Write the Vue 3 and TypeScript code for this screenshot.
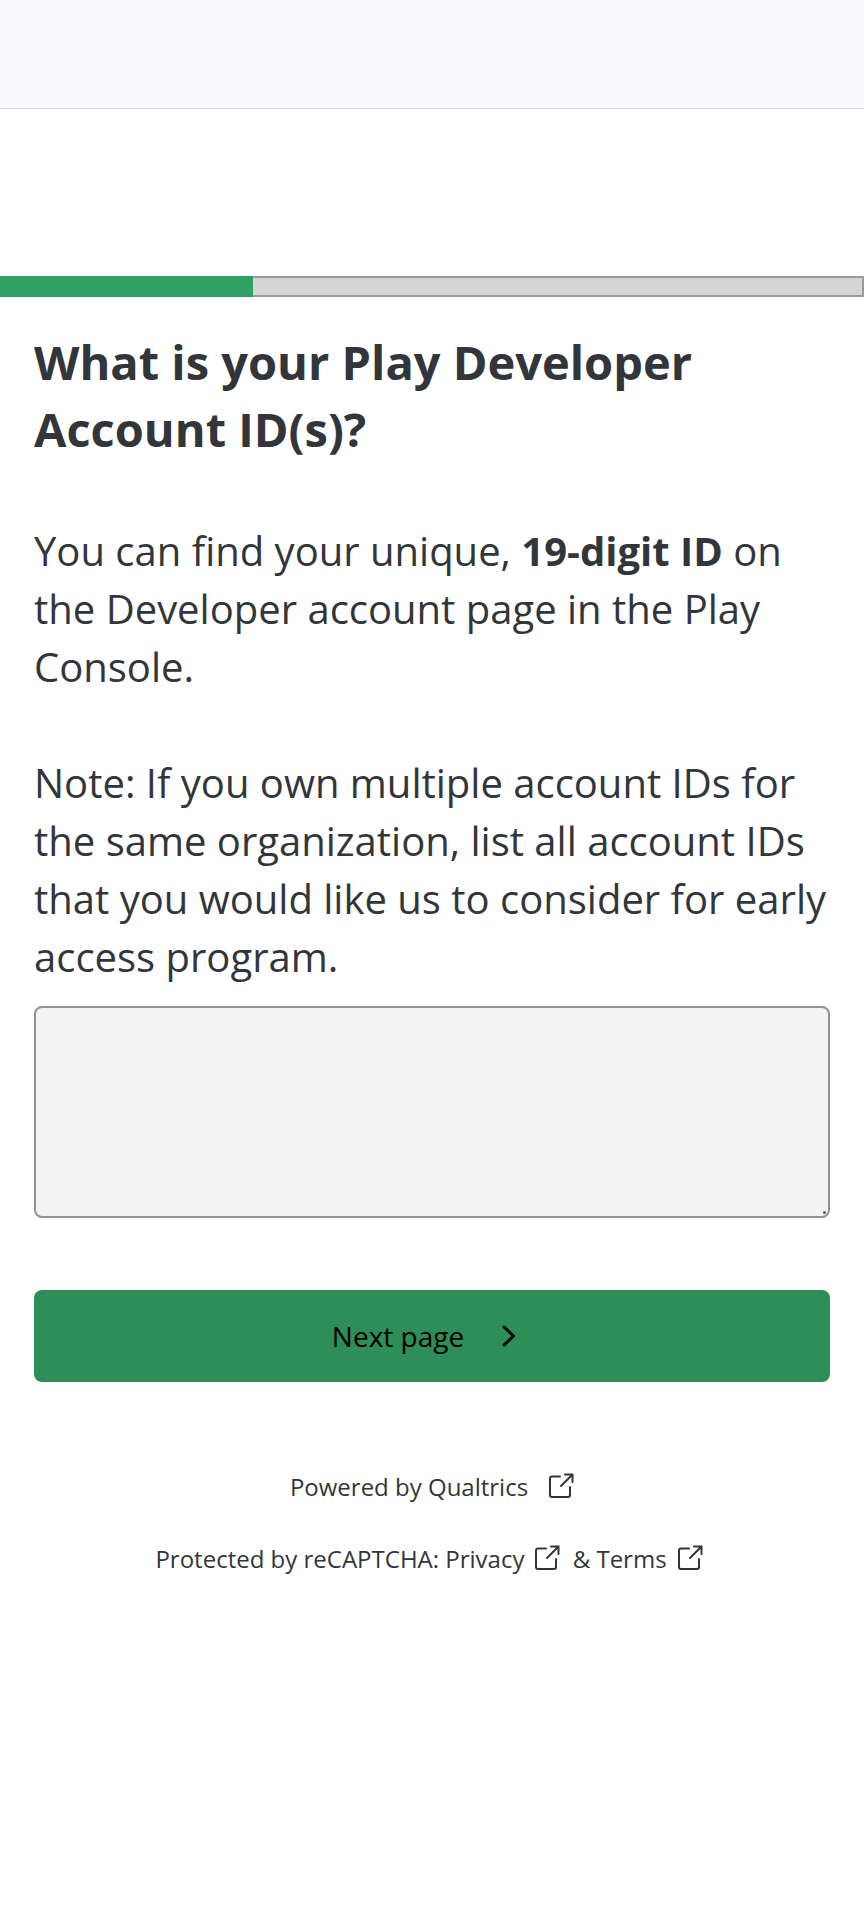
<script setup lang="ts">
import { ref } from 'vue'
const ids = ref('')
const progress = ref(29.3)
</script>

<template>
  <div class="page">
    <div class="topbar"></div>
    <div class="progress" role="progressbar" aria-label="Survey progress" :aria-valuenow="progress">
      <div class="fill" :style="{ width: progress + '%' }"></div>
    </div>
    <main class="content">
      <h1 id="question">What is your Play Developer Account ID(s)?</h1>
      <p>You can find your unique, <b>19-digit ID</b> on the Developer account page in the Play Console.</p>
      <p>Note: If you own multiple account IDs for the same organization, list all account IDs that you would like us to consider for early access program.</p>
      <div class="field">
        <textarea v-model="ids" aria-labelledby="question"></textarea>
      </div>
      <button type="button" class="next">
        <span>Next page</span>
        <svg width="14" height="22" viewBox="0 0 14 22"><path d="M2 2l9.500 9-9.500 9" /></svg>
      </button>
    </main>
    <footer>
      <div class="powered">
        <a href="#">Powered by Qualtrics<svg class="ext wide" viewBox="0 0 26 26"><path d="M12 3.500H4Q2 3.500 2 5.500V22Q2 24 4 24H20Q22 24 22 22V14M17 1.500H24.500V9M24.500 1.500L13 13" /></svg></a>
      </div>
      <div>
        Protected by reCAPTCHA: <a href="#">Privacy<svg class="ext" viewBox="0 0 26 26"><path d="M12 3.500H4Q2 3.500 2 5.500V22Q2 24 4 24H20Q22 24 22 22V14M17 1.500H24.500V9M24.500 1.500L13 13" /></svg></a>
        &amp; <a href="#">Terms<svg class="ext" viewBox="0 0 26 26"><path d="M12 3.500H4Q2 3.500 2 5.500V22Q2 24 4 24H20Q22 24 22 22V14M17 1.500H24.500V9M24.500 1.500L13 13" /></svg></a>
      </div>
    </footer>
  </div>
</template>

<style>
body { background: #fff; }
</style>
<style scoped>
.page { min-height: 100vh; color: #32363a; font-family: "Open Sans", "Noto Sans", sans-serif; }
.topbar { height: 108px; background: #f9f9ff; border-bottom: 1px solid #d9d9de; }
.progress { margin-top: 167px; height: 21px; background: #d5d5d5; box-shadow: inset 0 0 0 2px #959aa3; }
.fill { height: 21px; background: #2fa162; }
.content { padding: 32px 34px 0; }
h1 { margin: 0 0 59px; font-size: 47px; line-height: 67px; font-weight: 700; }
p { margin: 0 0 58px; font-size: 40px; line-height: 58px; }
p + p { margin-bottom: 20px; }
.field { position: relative; }
.field::after { content: ""; position: absolute; right: 4px; bottom: 4px; width: 3px; height: 3px; border-radius: 50%; background: #555a62; }
textarea { display: block; box-sizing: border-box; width: 100%; height: 212px; padding: 12px; border: 2px solid #8f949d; border-radius: 8px; background: #f4f4f4; color: inherit; font: inherit; resize: none; }
.next { display: flex; align-items: center; justify-content: center; gap: 38px; width: 100%; height: 92px; margin-top: 72px; padding: 0 16px 0 0; border: 0; border-radius: 8px; background: #2d8e58; color: #000; font: inherit; font-size: 28px; }
.next path { fill: none; stroke: currentColor; stroke-width: 3; stroke-linecap: round; stroke-linejoin: round; }
footer { padding-top: 87px; text-align: center; font-size: 24px; line-height: 36px; }
.powered { margin-bottom: 36px; }
a { color: inherit; text-decoration: none; }
.ext { width: 26px; height: 26px; margin: 0 6px 0 10px; vertical-align: -3px; fill: none; stroke: currentColor; stroke-width: 2; stroke-linecap: round; }
.wide { margin: 0 0 0 20px; }
</style>
